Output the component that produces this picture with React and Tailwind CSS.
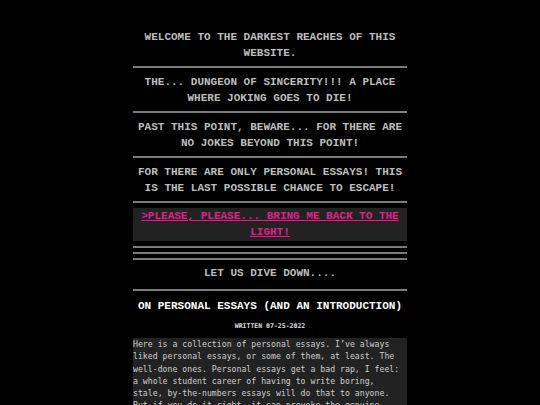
export default function App() {
  const mono = { fontFamily: '"Liberation Mono", "DejaVu Sans Mono", monospace' };
  const dv = { fontFamily: '"DejaVu Sans Mono", "Liberation Mono", monospace' };
  const Hr = ({ cls }) => <div className={`h-[2px] bg-[#7c7c7c] ${cls}`} />;
  const P = ({ children }) => (
    <p className="text-center text-[11px] leading-[16px] font-bold text-[#bdbdbd] uppercase" style={mono}>
      {children}
    </p>
  );
  return (
    <div className="min-h-[405px] bg-black">
      <div className="mx-auto w-[274px] pt-[29px] pb-10">
        <P>Welcome to the darkest reaches of this website.</P>
        <Hr cls="mt-[5px] mb-[6px]" />
        <P>The... dungeon of sincerity!!! A place where joking goes to die!</P>
        <Hr cls="mt-[5px] mb-[6px]" />
        <P>Past this point, beware... for there are no jokes beyond this point!</P>
        <Hr cls="mt-[5px] mb-[6px]" />
        <P>For there are only personal essays! This is the last possible chance to escape!</P>
        <Hr cls="mt-[5px] mb-[5px]" />
        <div className="bg-[#222222] h-[33px]">
          <a
            href="#"
            className="block text-center text-[11px] leading-[16px] font-bold text-[#e81c8c] underline uppercase"
            style={mono}
          >
            &gt;Please, please... bring me back to the light!
          </a>
        </div>
        <Hr cls="mt-[5px]" />
        <Hr cls="mt-[4px]" />
        <Hr cls="mt-[4px]" />
        <div className="mt-[5px]">
          <P>Let us dive down....</P>
        </div>
        <Hr cls="mt-[8px]" />
        <h1
          className="mt-[7px] text-center text-[11px] leading-[16px] font-bold text-white uppercase"
          style={mono}
        >
          On personal essays (and an introduction)
        </h1>
        <p className="mt-[8px] text-center text-[6.5px] leading-[8px] font-bold text-[#e0e0e0] uppercase" style={dv}>
          Written 07-25-2022
        </p>
        <div className="mt-[8px] bg-[#222222] text-[8.2px] leading-[12.3px] text-[#cfcfcf]" style={dv}>
          Here is a collection of personal essays. I’ve always liked personal essays, or some of them, at least. The
          well-done ones. Personal essays get a bad rap, I feel: a whole student career of having to write boring,
          stale, by-the-numbers essays will do that to anyone. But if you do it right, it can provoke the genuine
          article: a real look inside someone else’s head, a way of seeing the world that you never would have come
          across otherwise.
        </div>
      </div>
    </div>
  );
}
